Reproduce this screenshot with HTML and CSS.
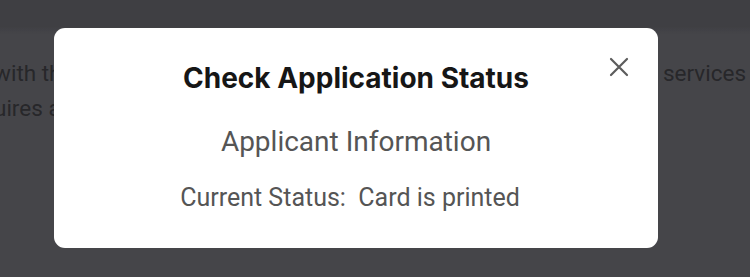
FILE: index.html
```html
<!DOCTYPE html>
<html lang="en">
<head>
<meta charset="utf-8">
<title>Check Application Status</title>
<link rel="stylesheet" href="styles.css">
</head>
<body>
<main class="page">
  <div class="page-line">
    <span>with the Department of Motor Vehicles to access online</span>
    <span>services</span>
  </div>
  <div class="page-line">
    <span>uires a valid account and identification</span>
  </div>
</main>
<div class="overlay">
  <section class="modal" role="dialog" aria-labelledby="modal-title">
    <button class="close" aria-label="Close">
      <svg width="20" height="20" viewBox="0 0 20 20" aria-hidden="true">
        <path d="M2 2 L18 18 M18 2 L2 18" stroke="#5c5c5c" stroke-width="2.2" stroke-linecap="round" fill="none"/>
      </svg>
    </button>
    <h2 id="modal-title" class="title">Check Application Status</h2>
    <p class="subtitle">Applicant Information</p>
    <p class="status">Current Status:&nbsp; Card is printed</p>
  </section>
</div>
</body>
</html>
```
FILE: styles.css
```css
html, body {
  margin: 0;
  padding: 0;
  height: 100%;
}
body {
  background: #454549;
  font-family: Roboto, "Noto Sans", sans-serif;
  overflow: hidden;
}
.page {
  padding-top: 56px;
  margin-left: -6px;
  margin-right: 4px;
}
.page-line {
  display: flex;
  justify-content: space-between;
  font-size: 22.5px;
  line-height: 35px;
  color: #27272a;
  white-space: nowrap;
}
.overlay {
  position: fixed;
  inset: 0;
  padding: 28px 0 0 54px;
  background: linear-gradient(#3f3f43 0, #3f3f43 26px, transparent 34px);
}
.modal {
  position: relative;
  box-sizing: border-box;
  width: 604px;
  height: 220px;
  background: #ffffff;
  border-radius: 11px;
  padding-top: 34px;
  display: flex;
  flex-direction: column;
  align-items: center;
}
.close {
  position: absolute;
  top: 27px;
  right: 27px;
  width: 24px;
  height: 24px;
  padding: 2px;
  border: 0;
  background: transparent;
  display: flex;
  align-items: center;
  justify-content: center;
}
.title {
  margin: 0;
  font-family: Inter, "Liberation Sans", sans-serif;
  font-weight: 700;
  font-size: 28px;
  line-height: 32px;
  color: #161616;
}
.subtitle {
  margin: 31px 0 0;
  font-size: 28px;
  line-height: 33px;
  color: #555555;
}
.status {
  margin: 25px 0 0 -12px;
  font-size: 25px;
  line-height: 30px;
  color: #555555;
}
```
